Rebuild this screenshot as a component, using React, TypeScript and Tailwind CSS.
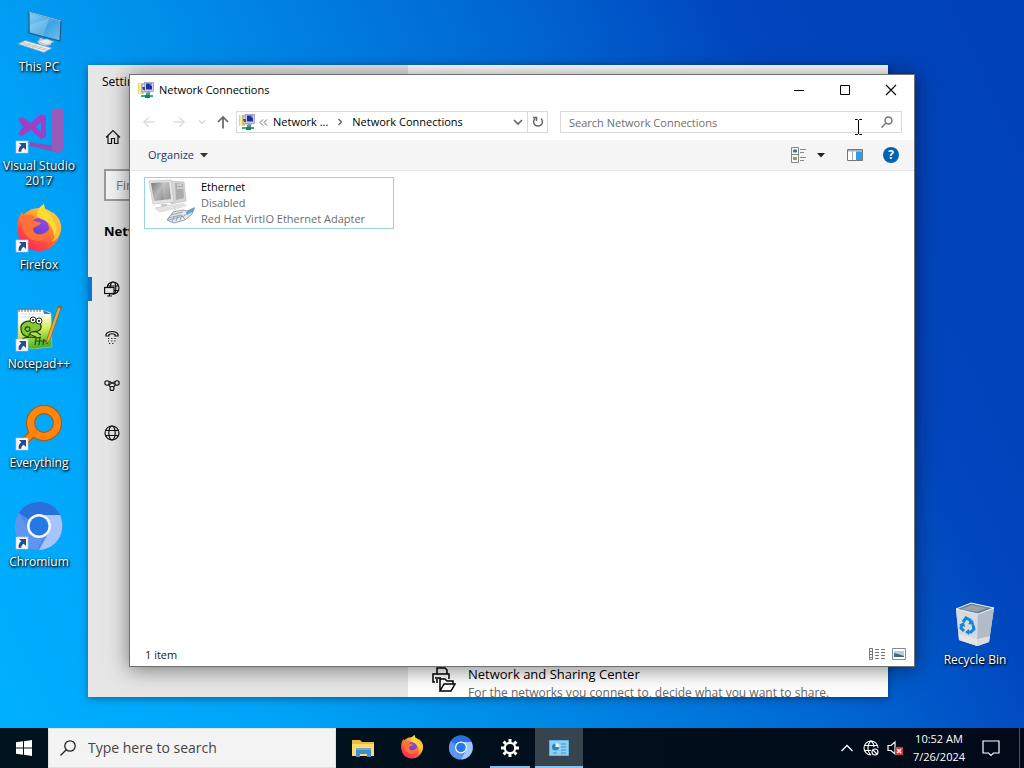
import type { ReactNode } from "react";

const ShortcutArrow = () => (
  <g>
    <rect x="1" y="34" width="12" height="12" fill="#f8f8f8" stroke="#b9c6d6" strokeWidth="0.6" />
    <path d="M4 36h7v7l-2.300-2.300c-1.700 1-2.500 2.300-2.400 4.100H3.600c-.3-2.700.6-4.900 2.700-6.500z" fill="#274b8c" />
  </g>
);

const ThisPcIcon = () => (
  <svg viewBox="0 0 48 48" className="size-12">
    <defs>
      <linearGradient id="pc-screen" x1="0" y1="0" x2="1" y2="1">
        <stop offset="0" stopColor="#8fd0f5" />
        <stop offset="0.55" stopColor="#3fa3e3" />
        <stop offset="1" stopColor="#6cc3f3" />
      </linearGradient>
    </defs>
    <path d="M25 30l10 3 1 4-8 1-5-3z" fill="#cfd6de" />
    <path d="M22 33l10-2 7 3-8 3z" fill="#e6eaee" stroke="#9aa7b5" strokeWidth="0.5" />
    <path d="M14 4l32 9-1 20-31-8z" fill="url(#pc-screen)" stroke="#26577f" strokeWidth="1.200" />
    <path d="M14 4l32 9" stroke="#b8dcf2" strokeWidth="0.800" />
    <path d="M15 17L34 10l-6 18-13-4z" fill="#fff" opacity="0.180" />
    <path d="M3 36l7-3.500 27 7.500-8 4.500z" fill="#eceff2" stroke="#8899a8" strokeWidth="0.700" />
    <path d="M6 35.500l25 7M8 34.500l25 7M11 38l5-3M17 39.500l5-3M23 41l5-3" stroke="#a7b2bd" strokeWidth="0.600" />
  </svg>
);

const VisualStudioIcon = () => (
  <svg viewBox="0 0 48 48" className="size-12">
    <path d="M36 3l8-2 4 2v40l-4 3-8-2z" fill="#965bbd" />
    <path d="M15 35l22 3.500V44l8 2-30-7z" fill="#8b50b7" />
    <path d="M3 12l4-2 9 6 10-9 5 2v21l-5 2-10-9-9 6-4-2 5-7zm23 3l-5 5 5 5z" fill="#a13ec6" fillRule="evenodd" />
    <ShortcutArrow />
  </svg>
);

const FirefoxArt = () => (
  <g>
    <circle cx="24" cy="23" r="21" fill="url(#fox-body)" />
    <path d="M3 27C1 16 4 10 7 6l3 6c4-2 8-3 12-2 0-5 2-9 7-12 0 6 4 8 8 12l1-4c7 7 9 15 7 22-3 11-11 17-21 17C12 45 4 37 3 27z" fill="url(#fox-body)" />
    <circle cx="24" cy="22" r="10" fill="url(#fox-globe)" />
    <path d="M5 12c4-4 10-4 15-1l-3 3c3 2 7 1 9 3-2 4-7 3-8 6 0 4 4 6 9 5 4-1 7-4 8-7 1 8-5 14-12 14C14 35 6 26 5 12z" fill="#ff7139" />
    <path d="M22 10c0-5 2-9 7-12 0 6 5 9 9 14 5 6 5 14 1 19 0-8-4-14-10-17-3-1-5-2-7-4z" fill="#ffda33" />
    <path d="M38 14c5 8 4 17-2 22 7-2 11-9 10-17-1-5-3-9-7-11z" fill="#ffbd3a" />
  </g>
);

const FirefoxDefs = () => (
  <defs>
    <linearGradient id="fox-body" x1="0.850" y1="0" x2="0.250" y2="1">
      <stop offset="0" stopColor="#ffe14a" />
      <stop offset="0.400" stopColor="#ff9328" />
      <stop offset="0.750" stopColor="#ff4842" />
      <stop offset="1" stopColor="#f0276c" />
    </linearGradient>
    <linearGradient id="fox-globe" x1="0.800" y1="0" x2="0.200" y2="1">
      <stop offset="0" stopColor="#a043e8" />
      <stop offset="1" stopColor="#4f46ce" />
    </linearGradient>
  </defs>
);

const FirefoxIcon = () => (
  <svg viewBox="0 0 48 48" className="size-12 overflow-visible">
    <FirefoxDefs />
    <FirefoxArt />
    <ShortcutArrow />
  </svg>
);

const NotepadIcon = () => (
  <svg viewBox="0 0 48 48" className="size-12">
    <defs>
      <linearGradient id="npp-page" x1="0" y1="0" x2="0.200" y2="1">
        <stop offset="0.250" stopColor="#ffffff" />
        <stop offset="0.600" stopColor="#d9ee5c" />
        <stop offset="1" stopColor="#4cb52b" />
      </linearGradient>
    </defs>
    <path d="M3 5h25l8 3 1 34-20 2-14-5z" fill="url(#npp-page)" stroke="#b7c3b4" strokeWidth="0.600" />
    <path d="M5 9h23M5 12h25" stroke="#c4d0da" strokeWidth="0.700" />
    <path d="M4 3v4M7 3v4M10 3v4M13 3v4M16 3v4M19 3v4M22 3v4M25 3v4" stroke="#64707a" />
    <path d="M28 5l8 4h-7z" fill="#3d7bbd" />
    <path d="M6 24c-1-6 5-9 12-8 5 0 9 2 8 7-1 4-7 4-10 4l-3 5c-4-1-7-4-7-8z" fill="#84c832" stroke="#1d3d12" strokeWidth="1.200" />
    <circle cx="18" cy="15" r="3" fill="#fff" stroke="#1d3d12" />
    <circle cx="24" cy="16" r="3" fill="#fff" stroke="#1d3d12" />
    <circle cx="18" cy="15" r="1" />
    <circle cx="24" cy="16" r="1" />
    <path d="M10 25c0-4 5-4 5-1s-4 3-4 1M14 29l7 3M20 26l6 4M7 34c8-5 13 1 19-2M20 40l1-7M24 40l1-7M28 40l1-6M32 39l1-5M20 36h13" fill="none" stroke="#1f4b14" strokeWidth="1.200" />
    <path d="M43 2l3 1-11 32-4 4 1-5z" fill="#e5aa38" stroke="#86601c" strokeWidth="0.700" />
    <path d="M43 2l1-2 3 1-1 3z" fill="#a85a32" />
    <ShortcutArrow />
  </svg>
);

const EverythingIcon = () => (
  <svg viewBox="0 0 48 48" className="size-12">
    <path d="M18 29L9 38" stroke="#a65a12" strokeWidth="8" />
    <circle cx="29" cy="19" r="13.500" fill="none" stroke="#a65a12" strokeWidth="9" />
    <path d="M19 28L9 38" stroke="#ff7f0a" strokeWidth="6" />
    <circle cx="29" cy="19" r="13.500" fill="none" stroke="#ff850e" strokeWidth="7" />
    <ShortcutArrow />
  </svg>
);

const ChromiumArt = () => (
  <g>
    <circle cx="24" cy="23" r="24" fill="#4e8bec" />
    <path d="M24 23L4 10C13-5 37-5 45 12H24z" fill="#2870da" />
    <path d="M24 12h21c7 17-3 34-21 35l10-18z" fill="#a5c6fb" />
    <path d="M4 10l10 18c4 6 10 8 15 5l-7 14C3 45-6 25 4 10z" fill="#5f95ef" />
    <circle cx="24" cy="23" r="12" fill="#f3f8ff" />
    <circle cx="24" cy="23" r="9.500" fill="#2479e4" />
  </g>
);

const ChromiumIcon = () => (
  <svg viewBox="0 0 48 48" className="size-12 overflow-visible">
    <ChromiumArt />
    <ShortcutArrow />
  </svg>
);

const RecycleBinIcon = () => (
  <svg viewBox="0 0 48 48" className="size-12">
    <path d="M5 8L20 2l23 5-5 34-11 4L8 39z" fill="#d3d9df" />
    <path d="M5 8l22 5-1 32-18-6z" fill="#d3dae1" />
    <path d="M27 13l16-6-5 34-12 4z" fill="#b2bbc7" />
    <path d="M5 8L20 2l23 5-16 6z" fill="#717e8e" stroke="#eef2f5" />
    <path d="M10 8l11-4 15 3-10 4z" fill="#97a2af" />
    <path d="M8 33l18 5 13-3-1 6-12 4-18-6z" fill="#eceae5" opacity="0.700" />
    <g fill="none" stroke="#1684d4" strokeWidth="3">
      <path d="M12 21l3-4 4 2 1 3" />
      <path d="M22 24l1 4-3 3h-3" />
      <path d="M13 30l-3-3 1-4" />
    </g>
    <path d="M17 23l6 1-1-5zM18 28v6l-4-3zM8 24l5-3 1 5z" fill="#1684d4" />
  </svg>
);

interface DesktopShortcutProps {
  label: string;
  children: ReactNode;
}

const DesktopShortcut = ({ label, children }: DesktopShortcutProps) => (
  <button className="flex h-[99px] w-[78px] flex-col items-center gap-[3px] pt-2 text-xs leading-[15px] text-white [text-shadow:1px_1px_2px_#000,0_1px_3px_#000]">
    {children}
    <span>{label}</span>
  </button>
);

const NetworkFolderIcon = () => (
  <svg viewBox="0 0 16 16" className="size-4 shrink-0">
    <path d="M0 1h5l1 1v10H0z" fill="#e8d56b" />
    <path d="M1 1h2v11H1z" fill="#f6ed9c" />
    <rect x="4" y="2" width="7" height="8" fill="#d9dde8" stroke="#8389a4" strokeWidth="0.700" />
    <rect x="6.500" y="0.500" width="9" height="9" fill="#cfd2e8" stroke="#8b8fb8" strokeWidth="0.700" />
    <path d="M8 1.500h6v6H8z" fill="#242d9c" />
    <path d="M11 1.500h3v3z" fill="#8f9de6" />
    <path d="M4 5h3v3H5z" fill="#3a48a8" />
    <path d="M9 10h3l1 1H8z" fill="#9a9fbd" />
    <path d="M8 11h4v2h3v2H3v-2h5z" fill="#2fae86" />
    <path d="M7 13h5v3H7z" fill="#1a8063" />
  </svg>
);

const EthernetIcon = () => (
  <svg viewBox="0 0 48 48" className="size-12 shrink-0">
    <defs>
      <linearGradient id="eth-screen" x1="0" y1="0" x2="1" y2="0.600">
        <stop offset="0" stopColor="#777" />
        <stop offset="0.500" stopColor="#b8b8b8" />
        <stop offset="1" stopColor="#858585" />
      </linearGradient>
    </defs>
    <path d="M21 3l15 1 2 19-15 3z" fill="#d5d5d5" stroke="#bcbcbc" strokeWidth="0.700" />
    <path d="M27 5l8 1 1 14-8 2z" fill="#acacac" />
    <path d="M29 7h5M29 10h6" stroke="#eee" />
    <path d="M23 27l13-2 3 3-13 4z" fill="#e1e1e1" />
    <path d="M1 3l22-1 3 22-21 2z" fill="#e3e3e3" stroke="#c4c4c4" strokeWidth="0.700" />
    <path d="M3 5l18-1 2 17-17 2z" fill="url(#eth-screen)" />
    <path d="M14 4l7 0 2 17-7 1z" fill="#fff" opacity="0.200" />
    <path d="M13 26h6l1 5h-6z" fill="#cacaca" />
    <path d="M7 30l16-3 5 3-16 4z" fill="#e6e6e6" stroke="#c6c6c6" strokeWidth="0.600" />
    <path d="M19 42l6-8 10-2 4 1 7-3-2 6-7 6-11 3z" fill="#e4e9ee" stroke="#7b8894" strokeWidth="0.800" />
    <path d="M20 40l13-3 4 4M23 37l12-3M24 44l2-5M28 43l2-5M32 42l2-5M20 42l16-4 6-5" fill="none" stroke="#8592a0" strokeWidth="0.800" />
    <path d="M38 34l9-5-1 4-7 4z" fill="#63a5c9" />
  </svg>
);

const HomeIcon = () => (
  <svg viewBox="0 0 16 16" className="size-4" fill="none" stroke="#111" strokeWidth="1.200">
    <path d="M1 8.500L8 1.500l7 7M3 7v7.500h3.500V9.500h3v5H13V7" />
  </svg>
);

const GlobeIcon = () => (
  <svg viewBox="0 0 16 16" className="size-4" fill="none" stroke="#111" strokeWidth="1.200">
    <circle cx="8" cy="8" r="7" />
    <ellipse cx="8" cy="8" rx="3.200" ry="7" />
    <path d="M1.500 5.500h13M1.500 10.500h13" />
  </svg>
);

const StatusIcon = () => (
  <svg viewBox="0 0 16 16" className="size-4" fill="none" stroke="#111" strokeWidth="1.200">
    <circle cx="9" cy="7" r="6" />
    <ellipse cx="9" cy="7" rx="2.800" ry="6" />
    <path d="M3.500 5h11M4 9.500h10.500" />
    <rect x="0.600" y="6.500" width="9.400" height="6" fill="#e6e6e6" />
    <path d="M5.500 12.500V15M3 15h5" />
  </svg>
);

const DialUpIcon = () => (
  <svg viewBox="0 0 16 16" className="size-4" fill="none" stroke="#111" strokeWidth="1.200">
    <path d="M2 7V5.500C4 1.500 12 1.500 14 5.500V7h-3V5.500C9 4.500 7 4.500 5 5.500V7z" />
    <path d="M4 9.500h8M4 12h8M5 14.500h6" strokeDasharray="1.200 2" />
  </svg>
);

const VpnIcon = () => (
  <svg viewBox="0 0 16 16" className="size-4" fill="none" stroke="#111" strokeWidth="1.100">
    <circle cx="3" cy="6" r="2.200" />
    <circle cx="13" cy="6" r="2.200" />
    <circle cx="8" cy="11.500" r="2" />
    <path d="M5 5c2-1 4 3 6 1.500M5 7.500c2 0 3-3 6-2.500M4.500 8L6.500 10M11.500 8l-2 2" />
  </svg>
);

const settingsNav = [
  { name: "Status", icon: <StatusIcon />, active: true },
  { name: "Dial-up", icon: <DialUpIcon /> },
  { name: "VPN", icon: <VpnIcon /> },
  { name: "Proxy", icon: <GlobeIcon /> },
];

const SettingsWindow = () => (
  <section className="absolute top-[65px] right-[136px] bottom-[31px] left-[88px] flex overflow-hidden bg-white shadow-[0_2px_8px_rgb(0_0_0/0.35)]">
    <aside className="flex w-80 shrink-0 flex-col bg-[#e6e6e6]">
      <h2 className="px-3.5 pt-2 text-xs leading-[18px]">Settings</h2>
      <button aria-label="Home" className="mt-[22px] flex h-12 items-center px-[17px]">
        <HomeIcon />
      </button>
      <input
        aria-label="Find a setting"
        placeholder="Find a setting"
        className="mx-4 mt-2 h-8 border-2 border-[#999] bg-[#f3f3f3] px-2.5 text-[13px] placeholder:text-[#767676]"
      />
      <h3 className="mt-5 px-4 text-[13px] leading-5 font-bold">Network &amp; Internet</h3>
      <nav className="mt-6 flex flex-col">
        {settingsNav.map((item) => (
          <button key={item.name} aria-label={item.name} className="flex h-12 items-center gap-3">
            <span className={item.active ? "h-6 w-1 bg-[#0078d7]" : "h-6 w-1"} />
            {item.icon}
          </button>
        ))}
      </nav>
    </aside>
    <div className="flex min-w-0 flex-1 flex-col justify-end">
      <div className="flex h-[34px] gap-3 pl-6">
        <svg viewBox="0 0 24 26" className="mt-1 h-[26px] w-6 shrink-0" fill="none" stroke="#000" strokeWidth="1.500">
          <path d="M5 7V1h8l2 2v4M3 15H1V7h16v5M3 11h6M5 12v4" />
          <path d="M8 24V12h5l2 2h6v3M8 24l4-7h11l-4 7z" />
        </svg>
        <div className="min-w-0">
          <p className="text-[13px] leading-[22px] text-black">Network and Sharing Center</p>
          <p className="text-xs leading-4 whitespace-nowrap text-[#666]">
            For the networks you connect to, decide what you want to share.
          </p>
        </div>
      </div>
    </div>
  </section>
);

const TitleBar = () => (
  <header className="flex h-[30px] items-center pl-2">
    <NetworkFolderIcon />
    <h1 className="ml-[5px] flex-1 text-[11px] text-black">Network Connections</h1>
    <button aria-label="Minimize" className="grid h-full w-[46px] place-items-center">
      <svg viewBox="0 0 12 12" className="size-3"><path d="M1 6.500h10" stroke="#000" /></svg>
    </button>
    <button aria-label="Maximize" className="grid h-full w-[46px] place-items-center">
      <svg viewBox="0 0 12 12" className="size-3"><path d="M1.500 1.500h9v9h-9z" fill="none" stroke="#000" /></svg>
    </button>
    <button aria-label="Close" className="grid h-full w-[46px] place-items-center">
      <svg viewBox="0 0 12 12" className="size-3"><path d="M1 1l10 10M11 1L1 11" stroke="#000" strokeWidth="1.100" /></svg>
    </button>
  </header>
);

const AddressRow = () => (
  <div className="flex h-[35px] items-center pr-3 pb-px pl-3">
    <button aria-label="Back" className="w-[30px]">
      <svg viewBox="0 0 14 14" className="size-3.5" fill="none" stroke="#dedede" strokeWidth="1.500"><path d="M13 7H2M6.500 2.500L2 7l4.500 4.500" /></svg>
    </button>
    <button aria-label="Forward" className="w-[26px]">
      <svg viewBox="0 0 14 14" className="size-3.5" fill="none" stroke="#dedede" strokeWidth="1.500"><path d="M1 7h11M7.500 2.500L12 7l-4.500 4.500" /></svg>
    </button>
    <button aria-label="Recent locations" className="w-[18px]">
      <svg viewBox="0 0 8 8" className="size-2" fill="none" stroke="#d0d0d0" strokeWidth="1.200"><path d="M1 2.500l3 3 3-3" /></svg>
    </button>
    <button aria-label="Up" className="w-5">
      <svg viewBox="0 0 14 14" className="size-3.5" fill="none" stroke="#666" strokeWidth="1.700"><path d="M7 13.500V2M2 7l5-5 5 5" /></svg>
    </button>
    <div className="flex h-[22px] flex-[308_1_0] items-center border border-[#d9d9d9] pl-0.5 text-[11px] whitespace-nowrap text-black">
      <NetworkFolderIcon />
      <svg viewBox="0 0 9 9" className="mr-[5px] ml-1 size-[9px]" fill="none" stroke="#666"><path d="M4 1.500l-3 3 3 3M8 1.500l-3 3 3 3" /></svg>
      <button>Network ...</button>
      <svg viewBox="0 0 8 8" className="mx-2 size-2" fill="none" stroke="#555" strokeWidth="1.200"><path d="M2.500 1l3 3-3 3" /></svg>
      <button>Network Connections</button>
      <button aria-label="Previous locations" className="mr-1 ml-auto">
        <svg viewBox="0 0 10 10" className="size-2.5" fill="none" stroke="#666" strokeWidth="1.700"><path d="M1 3l4 4 4-4" /></svg>
      </button>
      <button aria-label="Refresh" className="grid h-full w-5 place-items-center border-l border-[#d9d9d9]">
        <svg viewBox="0 0 12 12" className="size-3" fill="none" stroke="#666" strokeWidth="1.500"><path d="M3 2.500a4.400 4.400 0 1 0 6 0M1 1.500h3.500V5" /></svg>
      </button>
    </div>
    <div className="ml-3 flex h-[22px] flex-[332_1_0] items-center border border-[#d9d9d9] pr-2">
      <input
        aria-label="Search Network Connections"
        placeholder="Search Network Connections"
        className="h-full min-w-0 flex-1 pl-2 text-[11px] outline-none placeholder:text-[#6d6d6d]"
      />
      <svg viewBox="0 0 12 12" className="size-3" fill="none" stroke="#777" strokeWidth="1.500"><circle cx="7.500" cy="4.500" r="3.500" /><path d="M5 7l-4.500 4.500" /></svg>
    </div>
  </div>
);

const CommandBar = () => (
  <div className="flex h-[31px] items-center border-b border-[#e8e8e8] bg-[#f5f5f5] pr-[15px] pl-[18px] text-[11px] text-[#1e395b]">
    <button className="flex items-center gap-1.5">
      Organize
      <svg viewBox="0 0 8 5" className="h-[5px] w-2"><path d="M0 0h8L4 4.500z" fill="#333" /></svg>
    </button>
    <button aria-label="Change your view" className="ml-auto">
      <svg viewBox="0 0 16 16" className="size-4" fill="none" stroke="#888">
        <path d="M.5.500h7v15h-7zM.5 7.500h7" />
        <path d="M2.500 3h3v2h-3z" fill="#4d6b9f" stroke="#4d6b9f" />
        <path d="M2.500 10.500h3v2h-3z" fill="#94a36e" stroke="#87995a" />
        <path d="M9 2.500h6M9 5.500h4M9 10.500h6M9 13.500h4" />
      </svg>
    </button>
    <button aria-label="More view options" className="ml-2.5">
      <svg viewBox="0 0 8 5" className="h-[5px] w-2"><path d="M0 0h8L4 4.500z" fill="#222" /></svg>
    </button>
    <button aria-label="Show the preview pane" className="ml-[22px]">
      <svg viewBox="0 0 16 12" className="h-3 w-4">
        <path d="M.5.500h15v11H.5z" fill="#fff" stroke="#777" />
        <path d="M1 1h14v1.500H1z" fill="#a8b3bf" />
        <path d="M5.500 2v9" stroke="#aaa" />
        <path d="M9 2.500h6V11H9z" fill="#2b9df0" />
      </svg>
    </button>
    <button aria-label="Help" className="ml-5 grid size-4 place-items-center rounded-full bg-[#0063b1] text-xs leading-4 font-bold text-white">
      ?
    </button>
  </div>
);

const NetworkWindow = () => (
  <main className="absolute top-[74px] right-[109px] bottom-[61px] left-[129px] flex flex-col border border-[#707070] bg-white shadow-[0_2px_20px_rgb(0_0_0/0.5)]">
    <TitleBar />
    <AddressRow />
    <CommandBar />
    <div className="flex-1 px-3.5 pt-1.5">
      <button className="flex h-[52px] w-[250px] gap-[5px] border border-[#99d1e8] pl-[3px] text-left text-[11px] leading-4">
        <EthernetIcon />
        <span className="flex flex-col pt-px whitespace-nowrap text-[#6d6d6d]">
          <span className="text-black">Ethernet</span>
          <span>Disabled</span>
          <span>Red Hat VirtIO Ethernet Adapter</span>
        </span>
      </button>
    </div>
    <footer className="flex h-6 items-center pr-2 pl-[15px] text-[11px] text-[#222]">
      <span className="pt-0.5">1 item</span>
      <button aria-label="Details view" className="ml-auto">
        <svg viewBox="0 0 16 12" className="h-3 w-4" fill="none" stroke="#777">
          <path d="M.5.500h3v11h-3zM.5 3.500h3M.5 6.500h3M.5 9.500h3" />
          <path d="M6 1.500h4M12 1.500h4M6 4.500h4M12 4.500h4M6 7.500h4M12 7.500h4M6 10.500h4M12 10.500h4" />
        </svg>
      </button>
      <button aria-label="Large icons view" className="ml-[7px]">
        <svg viewBox="0 0 14 12" className="h-3 w-3.5">
          <path d="M.5.500h13v11H.5z" fill="#fff" stroke="#7e8c99" />
          <path d="M2 3h10v6H2z" fill="#b9cfdf" />
          <path d="M2 5l4 1 6 2v1H2z" fill="#46647d" />
        </svg>
      </button>
    </footer>
  </main>
);

const ExplorerIcon = () => (
  <svg viewBox="0 0 24 24" className="size-6">
    <path d="M1 4h8l2 2h12v14H1z" fill="#f0b93a" />
    <path d="M1 8h22v12H1z" fill="#ffdb6e" />
    <path d="M5 14h15v7h-4v-3H9v3H5z" fill="#3d8fd1" />
    <path d="M5 12h15v2H5z" fill="#77a9c7" />
  </svg>
);

const SettingsGearIcon = () => (
  <svg viewBox="0 0 20 20" className="size-5">
    <circle cx="10" cy="10" r="5.200" fill="none" stroke="#fff" strokeWidth="2.200" />
    <g stroke="#fff" strokeWidth="3">
      <path d="M10 1v3M10 16v3M1 10h3M16 10h3M3.600 3.600l2.100 2.100M14.300 14.300l2.100 2.100M3.600 16.400l2.100-2.100M14.300 5.700l2.100-2.100" />
    </g>
  </svg>
);

const ControlPanelIcon = () => (
  <svg viewBox="0 0 20 16" className="h-4 w-5">
    <rect width="20" height="16" rx="1" fill="#5fb4e2" />
    <rect x="1" y="1" width="18" height="14" fill="#8bd0f2" />
    <circle cx="6.500" cy="7" r="3.500" fill="#2a84c2" />
    <path d="M6.500 7V3a4 4 0 0 1 4 4z" fill="#e7f7ff" />
    <path d="M12 4h5M12 7h5M12 10h5M4 13h4M12 13h5" stroke="#3c92c8" />
  </svg>
);

const taskbarApps = [
  { name: "File Explorer", icon: <ExplorerIcon /> },
  {
    name: "Firefox",
    icon: (
      <svg viewBox="0 0 48 48" className="size-6 overflow-visible">
        <FirefoxArt />
      </svg>
    ),
  },
  {
    name: "Chromium",
    icon: (
      <svg viewBox="0 0 48 48" className="size-6 overflow-visible">
        <ChromiumArt />
      </svg>
    ),
  },
];

const Taskbar = () => (
  <footer className="flex h-10 shrink-0 items-center bg-linear-to-r from-[#00141f] to-[#020a1a]">
    <button aria-label="Start" className="grid h-full w-12 place-items-center">
      <svg viewBox="0 0 16 16" className="size-4" fill="#fff">
        <path d="M0 2.300L7 1.300v6.200H0zM8 1.200L16 0v7.500H8zM0 8.500h7v6.200l-7-1zM8 8.500h8V16l-8-1.200z" />
      </svg>
    </button>
    <label className="flex h-full w-72 items-center gap-3 border border-[#dde2e5] bg-[#f3f3f3] pl-[11px]">
      <svg viewBox="0 0 16 16" className="size-4 shrink-0" fill="none" stroke="#222" strokeWidth="1.300">
        <circle cx="10" cy="6" r="5.200" />
        <path d="M6.300 9.700L.5 15.500" />
      </svg>
      <input
        aria-label="Type here to search"
        placeholder="Type here to search"
        className="min-w-0 flex-1 text-sm outline-none placeholder:text-[#444]"
      />
    </label>
    <nav className="ml-[3px] flex h-full gap-px">
      {taskbarApps.map((app) => (
        <button key={app.name} aria-label={app.name} className="grid w-12 place-items-center">
          {app.icon}
        </button>
      ))}
      <button aria-label="Settings" className="flex w-12 flex-col items-center justify-between pt-2.5">
        <SettingsGearIcon />
        <span className="h-0.5 w-10 bg-[#8bbdea]" />
      </button>
      <button aria-label="Network Connections" className="flex w-12 flex-col items-center justify-between bg-[#37444d] pt-3">
        <ControlPanelIcon />
        <span className="h-0.5 w-12 bg-[#8bc4f0]" />
      </button>
    </nav>
    <div className="ml-auto flex h-full items-center text-[11px] text-white">
      <button aria-label="Show hidden icons" className="grid w-6 place-items-center">
        <svg viewBox="0 0 12 8" className="h-2 w-3" fill="none" stroke="#fff" strokeWidth="1.300"><path d="M.5 7L6 1.500 11.500 7" /></svg>
      </button>
      <button aria-label="No internet access" className="grid w-6 place-items-center">
        <svg viewBox="0 0 16 16" className="size-4" fill="none" stroke="#fff" strokeWidth="1.100">
          <path d="M8 15A7 7 0 1 1 15 8M8 1C4 4 4 12 8 15M8 1c2 1.500 3 4 3 6M1.500 5.500h13M1.500 10.500H8" />
          <circle cx="12" cy="12" r="3" fill="#020a1a" />
          <path d="M10 10l4 4" />
        </svg>
      </button>
      <button aria-label="Speakers: muted" className="grid w-6 place-items-center">
        <svg viewBox="0 0 16 16" className="size-4">
          <path d="M1 5.500h3L8 2v12l-4-3.500H1z" fill="none" stroke="#fff" strokeWidth="1.200" />
          <path d="M8 7h8v8H8z" fill="#d93535" />
          <path d="M10 9l4 4M14 9l-4 4" stroke="#fff" strokeWidth="1.500" />
        </svg>
      </button>
      <button className="flex w-16 flex-col items-center leading-[18px] whitespace-nowrap">
        <span>10:52 AM</span>
        <span>7/26/2024</span>
      </button>
      <button aria-label="Notifications" className="grid w-10 place-items-center">
        <svg viewBox="0 0 18 18" className="size-[18px]" fill="none" stroke="#fff" strokeWidth="1.200"><path d="M1 2h16v12h-5.500L9 16.500 6.500 14H1z" /></svg>
      </button>
      <button aria-label="Show desktop" className="ml-2 h-full w-[5px] border-l border-[#4b5563]" />
    </div>
  </footer>
);

const App = () => {
  return (
    <div className="flex h-screen flex-col overflow-hidden font-['Open_Sans','Noto_Sans',sans-serif]">
      <div className="relative min-h-0 flex-1 bg-[linear-gradient(65deg,#00b0ff_0%,#00a4f8_20%,#0090ea_35%,#0066d2_62%,#0046be_78%,#0040b8_100%)]">
        <div className="flex h-full flex-col flex-wrap content-start">
          <DesktopShortcut label="This PC"><ThisPcIcon /></DesktopShortcut>
          <DesktopShortcut label="Visual Studio 2017"><VisualStudioIcon /></DesktopShortcut>
          <DesktopShortcut label="Firefox"><FirefoxIcon /></DesktopShortcut>
          <DesktopShortcut label="Notepad++"><NotepadIcon /></DesktopShortcut>
          <DesktopShortcut label="Everything"><EverythingIcon /></DesktopShortcut>
          <DesktopShortcut label="Chromium"><ChromiumIcon /></DesktopShortcut>
        </div>
        <div className="absolute right-2.5 bottom-9">
          <DesktopShortcut label="Recycle Bin"><RecycleBinIcon /></DesktopShortcut>
        </div>
        <SettingsWindow />
        <NetworkWindow />
        <svg viewBox="0 0 9 16" className="absolute top-[119px] left-[854px] h-4 w-[9px]" fill="none" stroke="#000">
          <path d="M1 .5h2.500l1 1 1-1H8M4.500 1v14M1 15.500h2.500l1-1 1 1H8" />
        </svg>
      </div>
      <Taskbar />
    </div>
  );
};

export default App;
